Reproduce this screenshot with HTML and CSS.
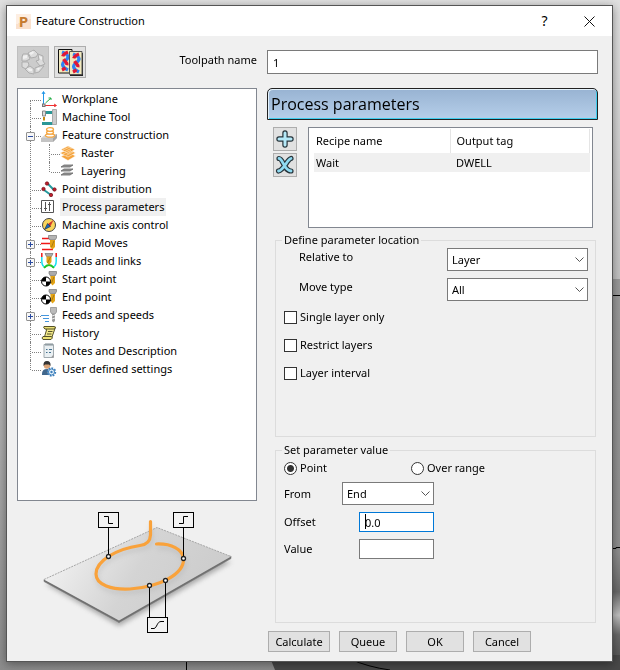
FILE: index.html
```html
<!DOCTYPE html>
<html lang="en">
<head>
<meta charset="utf-8">
<title>Feature Construction</title>
<link rel="stylesheet" href="styles.css">
</head>
<body>
<svg class="scene" viewBox="0 0 620 670" preserveAspectRatio="none" aria-hidden="true">
  <defs>
    <linearGradient id="sceneL" x1="0" y1="0" x2="0" y2="1"><stop offset="0" stop-color="#e0e0e0"/><stop offset=".4" stop-color="#c4c4c4"/><stop offset="1" stop-color="#8c8c8c"/></linearGradient>
    <linearGradient id="sceneR" x1="0" y1="0" x2="0" y2="1"><stop offset="0" stop-color="#9a9a9a"/><stop offset=".7" stop-color="#8e8e8e"/><stop offset=".8" stop-color="#6a6a6a"/><stop offset=".86" stop-color="#c0c0c0"/><stop offset=".91" stop-color="#686868"/><stop offset="1" stop-color="#4c4c4c"/></linearGradient>
  </defs>
  <rect width="620" height="670" fill="url(#sceneL)"/>
  <rect x="600" y="279" width="20" height="391" fill="url(#sceneR)"/>
  <path d="M269 655L275 670H620V655z" fill="#484848"/>
  <path d="M186.500 655V670M350 659Q368 667 390 670M606 295.500H620M606 548.500H616V547.500H620" fill="none" stroke="#000"/>
</svg>

<main class="dialog">
  <header class="titlebar">
    <span class="app-icon" aria-hidden="true">P</span>
    <h1 class="title">Feature Construction</h1>
    <button class="caption-btn" type="button" aria-label="Help">?</button>
    <button class="caption-btn" type="button" aria-label="Close"><svg width="11" height="11" viewBox="0 0 11 11"><path d="M.5 .5L10.500 10.500M10.500 .5L.5 10.500" stroke="#111" fill="none"/></svg></button>
  </header>

  <div class="content">
    <div class="toolbar">
      <button class="tool is-disabled" type="button" aria-label="Recalculate" disabled>
        <svg width="26" height="26" viewBox="0 0 26 26"><g fill="#dcdcdc" stroke="#adadad"><path d="M8 4L14 1L18 5L16 8L11 9z"/><path d="M18 5L23 7V12L25 15L20 17L16 12L19 11z"/><path d="M20 17L24 17L19 23L15 24V19z"/><path d="M14 20V25L9 24L5 20L10 17z"/><path d="M2 13H8L9 16L6 20L2 18z"/><path d="M3 5H8L10 10L6 12H2V8z"/></g><g fill="#f0f0f0"><path d="M9 4L13 2L14 4L11 6zM3 7L7 6V9L3 10zM19 7L22 8V11L20 10zM7 19L12 20V22L9 22zM17 19L20 19L18 22z"/></g></svg>
      </button>
      <button class="tool" type="button" aria-label="Copy toolpath">
        <svg width="26" height="28" viewBox="0 0 26 28"><path d="M1.500 1.500H15V25H1.500z" fill="#f1e9bd" stroke="#111"/><path d="M5 4C13 7 12 10 8 13S5 19 11 22" fill="none" stroke="#2f83f3" stroke-width="3.200"/><path d="M11 4C4 7 5 10 8 13S11 19 5 22" fill="none" stroke="#e01836" stroke-width="3.200" stroke-dasharray="7 3"/><path d="M13 5H26V28H13z" fill="#222"/><path d="M12.500 3.500H25V26.500H12.500z" fill="#f1e9bd" stroke="#555"/><path d="M16 6C24 9 23 12 19 15S16 21 22 24" fill="none" stroke="#2f83f3" stroke-width="3.200"/><path d="M22 6C15 9 16 12 19 15S22 21 16 24" fill="none" stroke="#e01836" stroke-width="3.200" stroke-dasharray="7 3"/></svg>
      </button>
      <label class="name-label" for="tpname">Toolpath name</label>
    </div>
    <input class="field name-input" id="tpname" type="text" value="1">

    <section class="side">
      <ul class="tree">
        <li class="node"><span class="row"><svg viewBox="0 0 16 16"><path d="M2.500 14V1M1 3L2.500 .5L4 3" stroke="#2196e8" fill="none"/><path d="M2.500 14.500H15M13 13L15.500 14.500L13 16" stroke="#ee3030" fill="none"/><path d="M4.500 12L10 7M7.500 7H10V9" stroke="#20ad45" fill="none"/><rect x="1.500" y="13" width="2.500" height="2.500" fill="#ccc" stroke="#777"/></svg><span class="label">Workplane</span></span></li>
        <li class="node"><span class="row"><svg viewBox="0 0 16 16"><path d="M3 2H12V5H3zM1 13H12V16H1z" fill="#2b9796"/><path d="M11.500 .5H15.500V15.500H11.500z" fill="#ccc" stroke="#aaa"/><path d="M1.500 2H4.500V7H1.500z" fill="#ddd" stroke="#888"/><path d="M2 8H4V11L3 12L2 11z" fill="#c58a12"/></svg><span class="label">Machine Tool</span></span></li>
        <li class="node"><span class="expander minus"></span><span class="row"><svg viewBox="0 0 16 16"><path d="M0 11L5 7H16V11L12 15H0z" fill="#d2d2d2"/><path d="M0 11H12L16 7V11L12 15H0z" fill="#a6a6a6"/><path d="M0 11H12V15H0z" fill="#c4c4c4"/><g fill="#fff" stroke="#f5a43c" stroke-width="1.300"><ellipse cx="9" cy="8.500" rx="4.500" ry="1.700"/><ellipse cx="9" cy="5.500" rx="3.500" ry="1.600"/><ellipse cx="9" cy="2.500" rx="3.500" ry="1.800"/></g></svg><span class="label">Feature construction</span></span>
          <ul class="branch">
            <li class="node"><span class="row"><svg viewBox="0 0 16 16"><g fill="#f4a23a" stroke="#fff" stroke-width=".5"><path d="M1 11.500L9 7.500L15.500 11L8 15.500z"/><path d="M0 8L9 4L15.500 8L8 12z"/><path d="M1 4.500L8 1L15 4.500L8 8.500z"/></g><path d="M3 5L10 2M5 6.500L12 3M3 9L11 5.500M6 10.500L13 7" stroke="#fde0b5" stroke-width=".7"/></svg><span class="label">Raster</span></span></li>
            <li class="node"><span class="row"><svg viewBox="0 0 16 16"><g fill="#999" stroke="#666" stroke-width=".8"><path d="M4 2H13L10 4H1zM4 6H13L10 8H1zM4 10H13L10 12H1z"/></g></svg><span class="label">Layering</span></span></li>
          </ul>
        </li>
        <li class="node"><span class="row"><svg viewBox="0 0 16 16"><path d="M3 9L10 14M6 2L13 9" stroke="#269a9d" stroke-width="2"/><g fill="#c11e2c" stroke="#6b1018" stroke-width=".7"><circle cx="6" cy="2.500" r="1.700"/><circle cx="13.500" cy="8.500" r="1.700"/><circle cx="2.500" cy="8" r="1.700"/><circle cx="10" cy="14" r="1.700"/></g></svg><span class="label">Point distribution</span></span></li>
        <li class="node"><span class="row"><svg viewBox="0 0 16 16"><g fill="none" stroke="#555"><path d="M.5 1.500H12.500V13.500H.5z" fill="#fff"/><path d="M4.500 3V12M3 9.500H6M8.500 3V12M7 5.500H10"/></g></svg><span class="label is-selected">Process parameters</span></span></li>
        <li class="node"><span class="row"><svg viewBox="0 0 16 16"><circle cx="8" cy="8" r="6.500" fill="#f9d55c" stroke="#444"/><path d="M12.500 3L9.500 9.500L8 8z" fill="#e4572b"/><path d="M12.500 3L7 7L8.500 9.500z" fill="#c33"/><path d="M3.500 12.500L6.500 6.500L9.500 9.500z" fill="#1d67b5" stroke="#123" stroke-width=".5"/></svg><span class="label">Machine axis control</span></span></li>
        <li class="node"><span class="expander plus"></span><span class="row"><svg viewBox="0 0 16 16"><path d="M1 3.500H9M0 8.500H9M1 14.500H12" stroke="#f01818" stroke-width="1.300"/><path d="M7.500 .5H15.500V3L14 5H9L7.500 3z" fill="#b4b4b4" stroke="#666" stroke-width=".6"/><path d="M9 5H14V12L11.500 14.500L9 12z" fill="#e3a315"/><path d="M10.500 12L13 6" stroke="#a87a14"/></svg><span class="label">Rapid Moves</span></span></li>
        <li class="node"><span class="expander plus"></span><span class="row"><svg viewBox="0 0 16 16"><path d="M.8 4V8Q.8 14 5 14M15.200 4V8Q15.200 14 11 14" stroke="#18dff0" stroke-width="1.500" fill="none"/><path d="M.8 0V4M15.200 0V4" stroke="#f01818" stroke-width="1.500"/><path d="M3 15Q8 9 13 15" stroke="#23c423" stroke-width="1.800" fill="none"/><path d="M4 .5H12L10.500 3.500H5.500z" fill="#aaa" stroke="#666" stroke-width=".6"/><path d="M5.500 3.500H10.500V9L8 12L5.500 9z" fill="#e3a315"/><path d="M6.500 10L9.500 4" stroke="#a87a14"/></svg><span class="label">Leads and links</span></span></li>
        <li class="node"><span class="row"><svg viewBox="0 0 16 16"><use href="#pt"/></svg><span class="label">Start point</span></span></li>
        <li class="node"><span class="row"><svg viewBox="0 0 16 16"><g id="pt"><path d="M8 .5H15.500V2.500L14 5H9.500L8 2.500z" fill="#aaa" stroke="#666" stroke-width=".6"/><path d="M9.500 5H14V12L11.500 14.500L9.500 12z" fill="#e3a315"/><path d="M10.500 12L13 6" stroke="#a87a14"/><circle cx="5" cy="10.500" r="4.500" fill="#fff" stroke="#000"/><path d="M5 10.500V6A4.500 4.500 0 0 0 .5 10.500zM5 10.500H9.500A4.500 4.500 0 0 1 5 15z" fill="#000"/></g></svg><span class="label">End point</span></span></li>
        <li class="node"><span class="expander plus"></span><span class="row"><svg viewBox="0 0 16 16"><path d="M0 8.500H8M2 11.500H8M4 14.500H8" stroke="#4596dd"/><path d="M9.500 .5H15.500V5L14 7H11L9.500 5z" fill="#bbb" stroke="#888" stroke-width=".7"/><path d="M11 7H14V14L12.500 15.500L11 14z" fill="#999"/><path d="M11 9L14 8M11 12L14 11" stroke="#eee"/></svg><span class="label">Feeds and speeds</span></span></li>
        <li class="node"><span class="row"><svg viewBox="0 0 16 16"><path d="M4 2H14.500L10.500 13.500H3L5.500 5z" fill="#f1e888" stroke="#55512a"/><path d="M3 1.500H13Q15.500 2 13.500 4H4Q2 3 3 1.500zM2 11.500H10.500Q12.500 13 10 14.500H2Q0 13 2 11.500z" fill="#ece274" stroke="#55512a"/><path d="M7 6.500H11.500M6 9H10.500" stroke="#55512a"/></svg><span class="label">History</span></span></li>
        <li class="node"><span class="row"><svg viewBox="0 0 16 16"><path d="M3 1.500H12.500V14.500H3z" fill="#eaf0f3" stroke="#a0a9ae"/><path d="M5 0V3M7 0V3M9 0V3M11 0V3" stroke="#839096"/><path d="M5 6.500H6.500M8 6.500H11M5 9.500H6.500M8 9.500H10" stroke="#44708e"/><path d="M10 14.500L12.500 11.500V14.500z" fill="#999"/></svg><span class="label">Notes and Description</span></span></li>
        <li class="node"><span class="row"><svg viewBox="0 0 16 16"><path d="M1 13Q1 8 6 8T11 13V14H1z" fill="#41678c"/><circle cx="6" cy="4.500" r="3.200" fill="#dba477"/><path d="M2.500 5Q2 0 6 0T9.500 5L8 3.500H4z" fill="#333"/><circle cx="10.500" cy="11" r="3.800" fill="#fff" stroke="#3b7ebb" stroke-width="1.800" stroke-dasharray="1.700 1.200"/><circle cx="10.500" cy="11" r="3" fill="#e8f3fb" stroke="#3b7ebb"/><circle cx="10.500" cy="11" r="1.200" fill="#3b7ebb"/></svg><span class="label">User defined settings</span></span></li>
      </ul>

      <svg class="illustration" viewBox="17 501 240 151" role="img" aria-label="Parameter position along a toolpath">
        <defs>
          <linearGradient id="plate" x1="0" y1=".3" x2="1" y2=".6"><stop offset="0" stop-color="#f4f4f4"/><stop offset=".5" stop-color="#d4d4d4"/><stop offset="1" stop-color="#cbcbcb"/></linearGradient>
          <filter id="soft" x="-10%" y="-10%" width="120%" height="130%"><feGaussianBlur stdDeviation="2.500"/></filter>
        </defs>
        <path d="M46 584L119 626L231 562L160 545z" fill="#888" opacity=".7" filter="url(#soft)"/>
        <path d="M44 579.500L119 620V622.500L44 581.500zM119 620L231 556V558.500L119 622.500z" fill="#707070" stroke="#777" stroke-width=".6"/>
        <path d="M44 579.500L157 527.500L231 556.500L119 620.500z" fill="url(#plate)"/>
        <path d="M44 579.500L157 527.500L231 556.500" fill="none" stroke="#a5a5a5" stroke-dasharray="2 1"/>
        <path d="M150.500 523V536Q150 545 140 545.500C116 549 96 562 96 574C96 586 112 590 130 589C160 587 184 574 183.500 559C183 549 171 544 156.500 544.500" transform="translate(1 3)" fill="none" stroke="#aaa" stroke-width="3" opacity=".5" filter="url(#soft)"/>
        <path d="M150.500 521.500V535Q150 544.500 140 545.500C116 549 96 561 96 574C96 585 112 590 130 589C160 587 184 574 183.500 559C183 549 171 543.500 156.500 544" fill="none" stroke="#f9a23b" stroke-width="3.200" stroke-linecap="round"/>
        <g fill="none" stroke="#000">
          <path d="M108.500 527V555M183.500 527V557M149.500 587V617M165.500 582V617"/>
          <g fill="#f3f3f3"><rect x="98.500" y="512.500" width="20" height="15"/><rect x="173.500" y="512.500" width="20" height="15"/><rect x="147.500" y="617.500" width="20" height="15"/></g>
          <path d="M104 516.500H108.500V523.500H113M179 523.500H183.500V516.500H188M151 628.500H154C157 628 157 621.500 161 621.500H164"/>
          <g fill="#fff" stroke="#222" stroke-width="1.300"><circle cx="108.500" cy="556.500" r="2"/><circle cx="183.500" cy="558.500" r="2"/><circle cx="149.500" cy="585.500" r="2"/><circle cx="165.500" cy="580.500" r="2"/></g>
        </g>
      </svg>
    </section>

    <section class="panel">
      <h2 class="panel-title">Process parameters</h2>
      <div class="recipes">
        <div class="recipe-actions">
          <button class="mini" type="button" aria-label="Add recipe"><svg width="20" height="20" viewBox="0 0 20 20"><path d="M10 4V16M4 10H16" stroke="#26333a" stroke-width="5.400" stroke-linecap="round"/><path d="M10 4V16M4 10H16" stroke="#b4e8f7" stroke-width="3" stroke-linecap="round"/></svg></button>
          <button class="mini" type="button" aria-label="Remove recipe"><svg width="20" height="20" viewBox="0 0 20 20"><g fill="none" stroke-linecap="round"><path d="M4 3.500C8 3.500 9 16 16 16M16 3.500C12 4.500 9 15 3.500 16" stroke="#26333a" stroke-width="5.200"/><path d="M4 3.500C8 3.500 9 16 16 16M16 3.500C12 4.500 9 15 3.500 16" stroke="#8fdaf1" stroke-width="2.800"/></g></svg></button>
        </div>
        <div class="list">
          <table class="recipe-table">
            <thead><tr><th class="recipe-col">Recipe name</th><th>Output tag</th></tr></thead>
            <tbody><tr><td>Wait</td><td>DWELL</td></tr></tbody>
          </table>
        </div>
      </div>

      <fieldset class="group location">
        <legend>Define parameter location</legend>
        <div class="pair"><label for="rel">Relative to</label><span class="combo"><select class="field" id="rel"><option>Layer</option></select><svg class="chevron" viewBox="0 0 9 6"><path d="M.5 .5L4.500 4.500L8.500 .5"/></svg></span></div>
        <div class="pair"><label for="move">Move type</label><span class="combo"><select class="field" id="move"><option>All</option></select><svg class="chevron" viewBox="0 0 9 6"><path d="M.5 .5L4.500 4.500L8.500 .5"/></svg></span></div>
        <div class="checks">
          <label class="choice"><input type="checkbox">Single layer only</label>
          <label class="choice"><input type="checkbox">Restrict layers</label>
          <label class="choice"><input type="checkbox">Layer interval</label>
        </div>
      </fieldset>

      <fieldset class="group value">
        <legend>Set parameter value</legend>
        <div class="radios">
          <label class="choice"><input type="radio" name="mode" checked>Point</label>
          <label class="choice"><input type="radio" name="mode">Over range</label>
        </div>
        <div class="values">
          <div class="entry"><label for="from">From</label><span class="combo"><select class="field" id="from"><option>End</option></select><svg class="chevron" viewBox="0 0 9 6"><path d="M.5 .5L4.500 4.500L8.500 .5"/></svg></span></div>
          <div class="entry"><label for="offset">Offset</label><span class="edit is-active"><input class="field" id="offset" type="text" value="0.0"></span></div>
          <div class="entry"><label for="val">Value</label><span class="edit"><input class="field" id="val" type="text"></span></div>
        </div>
      </fieldset>

      <footer class="actions">
        <button class="push wide" type="button">Calculate</button>
        <button class="push" type="button">Queue</button>
        <button class="push" type="button">OK</button>
        <button class="push" type="button">Cancel</button>
      </footer>
    </section>
  </div>
</main>
</body>
</html>
```
FILE: styles.css
```css
* { box-sizing: border-box; }

body {
  margin: 0;
  min-height: 100vh;
  display: flex;
  padding: 5px 7px 9px 6px;
  background: #999;
  color: #000;
  font: 11px/18px "Noto Sans", "Open Sans", sans-serif;
}

button, input, select { font: inherit; color: inherit; margin: 0; }
ul { list-style: none; margin: 0; padding: 0; }

.scene { position: fixed; inset: 0; width: 100%; height: 100%; z-index: -1; }

.dialog {
  flex: 1;
  display: flex;
  flex-direction: column;
  background: #f0f0f0;
  border: 1px solid #555;
  box-shadow: 0 2px 9px rgba(0, 0, 0, .4);
}

/* Title bar */
.titlebar { display: flex; align-items: center; height: 30px; padding-left: 9px; background: #fff; }
.app-icon {
  width: 15px;
  height: 15px;
  background: linear-gradient(160deg, #fdeee2 50%, #fae0cc 50%);
  color: #c67c30;
  font: bold 15px/15px "Open Sans", sans-serif;
  text-align: center;
}
.title { flex: 1; margin: 0 0 0 5px; font-size: 11px; font-weight: 400; }
.caption-btn { width: 45px; height: 30px; padding: 0; border: 0; background: none; font-size: 14px; display: grid; place-items: center; }

/* Dialog body */
.content {
  flex: 1;
  display: grid;
  grid-template-columns: 240px 1fr;
  grid-template-rows: 32px 1fr;
  gap: 10px;
  padding: 10px 14px 9px 10px;
}
.toolbar { display: flex; gap: 5px; }
.tool { width: 32px; height: 32px; padding: 0; border: 1px solid #adadad; background: #e1e1e1; display: grid; place-items: center; }
.tool.is-disabled { background: #ccc; border-color: #bfbfbf; }
.name-label { margin-left: auto; line-height: 28px; }

.field { border: 1px solid #7a7a7a; border-radius: 0; background: #fff; outline: 0; padding: 0 5px; width: 100%; }
.name-input { height: 24px; align-self: center; }

/* Feature tree */
.side { display: flex; flex-direction: column; min-width: 0; }
.tree { flex: 1; padding: 1px 0 0 8px; border: 1px solid #828790; background: #fff; }
.node { position: relative; }
.node::before { content: ""; position: absolute; left: 4px; top: 0; bottom: 0; border-left: 1px dotted #808080; }
.tree > .node:first-child::before { top: 10px; }
.node:last-child::before { bottom: auto; height: 10px; }
.row { position: relative; display: flex; align-items: center; height: 18px; padding-left: 15px; }
.row::before { content: ""; position: absolute; left: 6px; top: 10px; width: 9px; border-top: 1px dotted #808080; }
.row svg { width: 16px; height: 16px; flex: none; }
.label { margin-left: 3px; padding: 0 2px; white-space: nowrap; }
.label.is-selected { background: #f0f0f0; }
.branch { margin-left: 19px; }
.expander { position: absolute; z-index: 1; left: 0; top: 6px; width: 9px; height: 9px; border: 1px solid #919191; border-radius: 1px; background: linear-gradient(#2b4ba0, #2b4ba0) center / 5px 1px no-repeat, #f7f7f7; }
.expander.plus { background: linear-gradient(#2b4ba0, #2b4ba0) center / 5px 1px no-repeat, linear-gradient(#2b4ba0, #2b4ba0) center / 1px 5px no-repeat, #f7f7f7; }
.illustration { width: 100%; height: auto; flex: none; }

/* Parameter panel */
.panel { display: flex; flex-direction: column; min-width: 0; }
.panel-title {
  height: 32px;
  margin: 0;
  padding-left: 3px;
  border: 1px solid #222;
  border-radius: 5px 5px 0 0;
  background: linear-gradient(#98b3d2, #b6cfea);
  box-shadow: inset 1px 1px #e4f2fb, inset -1px -1px #3fcdee;
  font: 400 16px/31px "Open Sans", "Noto Sans", sans-serif;
}
.recipes { display: flex; gap: 11px; margin: 7px 5px 4px 6px; }
.recipe-actions { display: flex; flex-direction: column; gap: 2px; }
.mini { width: 24px; height: 24px; padding: 0; border: 1px solid #adadad; background: #e1e1e1; display: grid; place-items: center; }
.list { flex: 1; min-height: 101px; padding: 1px 2px 0 5px; border: 1px solid #828790; background: #fff; }
.recipe-table { width: 100%; border-collapse: collapse; table-layout: fixed; }
.recipe-table th, .recipe-table td { padding: 0 2px; text-align: left; font-weight: 400; }
.recipe-table th { height: 24px; border-right: 1px solid #e5e5e5; }
.recipe-table .recipe-col { width: 136px; }
.recipe-table td { height: 19px; background: #f0f0f0; }
.recipe-table th:last-child, .recipe-table td:last-child { padding-left: 6px; }

.group { min-width: 0; margin: 0 2px 0 8px; padding: 0 7px 0 8px; border: 1px solid #dcdcdc; }
.group legend { padding: 0 2px; margin-left: -2px; line-height: 16px; }
.location { flex: 205 1 auto; margin-bottom: 5px; min-height: 205px; }
.value { flex: 174 1 auto; min-height: 181px; }

.pair { display: flex; justify-content: space-between; padding-left: 15px; margin-bottom: 7px; }
.pair .combo { width: 141px; }
.combo, .edit { position: relative; display: block; }
.combo select { display: block; height: 23px; appearance: none; padding: 0 4px; }
.chevron { position: absolute; right: 4px; top: 9px; width: 9px; height: 6px; pointer-events: none; fill: none; stroke: #555; }
.checks { display: flex; flex-direction: column; align-items: flex-start; gap: 10px; }

.choice { display: flex; align-items: center; gap: 3px; }
.choice input { appearance: none; width: 13px; height: 13px; border: 1px solid #333; background: #fff; }
.choice input[type="radio"] { border-radius: 50%; }
.choice input[type="radio"]:checked { background: radial-gradient(circle, #333 3px, #fff 4px); }
.radios { display: grid; grid-template-columns: 127px 1fr; margin: 1px 0 5px; }

.values { width: 150px; display: flex; flex-direction: column; gap: 7px; }
.entry { display: flex; justify-content: space-between; align-items: center; }
.entry .combo { width: 92px; }
.edit { width: 75px; }
.edit input { display: block; height: 20px; }
.edit.is-active input { border-color: #0078d7; }
.edit.is-active::after { content: ""; position: absolute; left: 6px; top: 2px; width: 1px; height: 15px; background: #000; }

.actions { display: flex; gap: 9px; margin: 8px 0 0 1px; }
.push { width: 58px; height: 21px; padding: 0; border: 1px solid #adadad; background: #e1e1e1; line-height: 18px; }
.push.wide { width: 62px; }
```
